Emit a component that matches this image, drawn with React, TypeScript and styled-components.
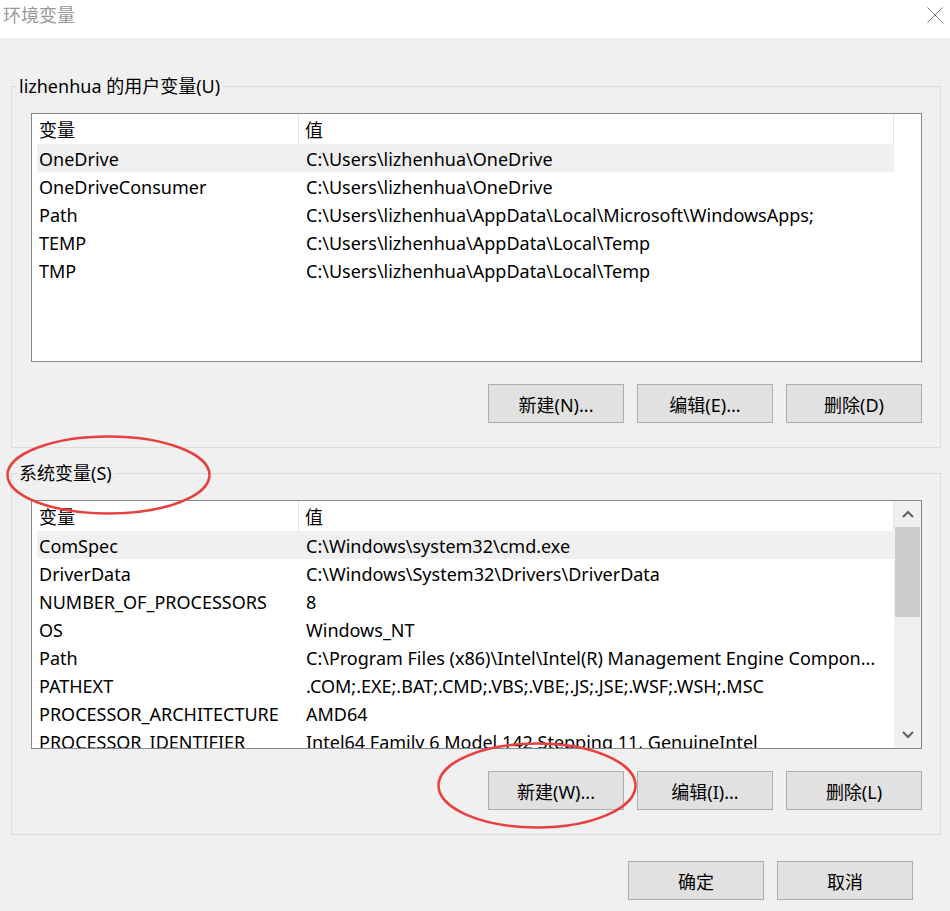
import React from 'react';
import styled, { createGlobalStyle } from 'styled-components';

type EnvVar = {
  name: string;
  value: string;
};

const USER_VARS: EnvVar[] = [
  { name: 'OneDrive', value: 'C:\\Users\\lizhenhua\\OneDrive' },
  { name: 'OneDriveConsumer', value: 'C:\\Users\\lizhenhua\\OneDrive' },
  { name: 'Path', value: 'C:\\Users\\lizhenhua\\AppData\\Local\\Microsoft\\WindowsApps;' },
  { name: 'TEMP', value: 'C:\\Users\\lizhenhua\\AppData\\Local\\Temp' },
  { name: 'TMP', value: 'C:\\Users\\lizhenhua\\AppData\\Local\\Temp' },
];

const SYSTEM_VARS: EnvVar[] = [
  { name: 'ComSpec', value: 'C:\\Windows\\system32\\cmd.exe' },
  { name: 'DriverData', value: 'C:\\Windows\\System32\\Drivers\\DriverData' },
  { name: 'NUMBER_OF_PROCESSORS', value: '8' },
  { name: 'OS', value: 'Windows_NT' },
  { name: 'Path', value: 'C:\\Program Files (x86)\\Intel\\Intel(R) Management Engine Compon...' },
  { name: 'PATHEXT', value: '.COM;.EXE;.BAT;.CMD;.VBS;.VBE;.JS;.JSE;.WSF;.WSH;.MSC' },
  { name: 'PROCESSOR_ARCHITECTURE', value: 'AMD64' },
  { name: 'PROCESSOR_IDENTIFIER', value: 'Intel64 Family 6 Model 142 Stepping 11, GenuineIntel' },
];

const GlobalStyle = createGlobalStyle`
  body {
    margin: 0;
    background: #f0f0f0;
  }
  * {
    box-sizing: border-box;
  }
`;

export default function App() {
  return (
    <>
      <GlobalStyle />
      <Window>
        <TitleBar>
          <Title>环境变量</Title>
          <CloseIcon viewBox="0 0 16 16">
            <path d="M0.5 0.5 L15.5 15.5 M15.5 0.5 L0.5 15.5" />
          </CloseIcon>
        </TitleBar>

        <Body>
          <VarGroup title="lizhenhua 的用户变量(U)" vars={USER_VARS} selected={0} scrollable={false}
            buttons={['新建(N)...', '编辑(E)...', '删除(D)']} />
          <VarGroup title="系统变量(S)" vars={SYSTEM_VARS} selected={0} scrollable
            buttons={['新建(W)...', '编辑(I)...', '删除(L)']} $top={13} />

          <Footer>
            <Button>确定</Button>
            <Button>取消</Button>
          </Footer>
        </Body>

        {/* red hand-drawn annotations on top of the dialog */}
        <Annotations viewBox="0 0 950 911">
          <ellipse cx="108.5" cy="475" rx="101" ry="38.5" />
          <ellipse cx="537" cy="785.5" rx="98.5" ry="42" />
        </Annotations>
      </Window>
    </>
  );
}

type VarGroupProps = {
  title: string;
  vars: EnvVar[];
  selected: number;
  scrollable: boolean;
  buttons: string[];
  $top?: number;
};

function VarGroup({ title, vars, selected, scrollable, buttons, $top = 0 }: VarGroupProps) {
  return (
    <Group $top={$top}>
      <Legend>{title}</Legend>
      <GroupBody>
        <ListBox>
          <Rows>
            <HeaderRow>
              <HeaderCell $first>变量</HeaderCell>
              <HeaderCell>值</HeaderCell>
            </HeaderRow>
            {vars.map((v, i) => (
              <Row key={v.name + i} $selected={i === selected}>
                <Cell $first>{v.name}</Cell>
                <Cell>{v.value}</Cell>
              </Row>
            ))}
          </Rows>
          {scrollable ? (
            <ScrollBar>
              <ArrowButton>
                <Chevron viewBox="0 0 12 8">
                  <polyline points="1,7 6,2 11,7" />
                </Chevron>
              </ArrowButton>
              <Thumb />
              <Track />
              <ArrowButton>
                <Chevron viewBox="0 0 12 8">
                  <polyline points="1,1 6,6 11,1" />
                </Chevron>
              </ArrowButton>
            </ScrollBar>
          ) : (
            <Gutter />
          )}
        </ListBox>
        <ButtonRow>
          {buttons.map((b) => (
            <Button key={b}>{b}</Button>
          ))}
        </ButtonRow>
      </GroupBody>
    </Group>
  );
}

const Window = styled.div`
  position: relative;
  width: 950px;
  height: 911px;
  display: flex;
  flex-direction: column;
  background: #f0f0f0;
  font-family: 'Noto Sans', 'Noto Sans CJK SC', sans-serif;
  font-size: 18px;
  color: #000;
  overflow: hidden;
`;

const TitleBar = styled.div`
  height: 38px;
  flex-shrink: 0;
  display: flex;
  align-items: center;
  justify-content: space-between;
  padding: 0 7px 8px 3px;
  background: #fff;
`;

const Title = styled.span`
  font-size: 18px;
  color: #999;
  line-height: 24px;
`;

const CloseIcon = styled.svg`
  width: 16px;
  height: 16px;
  stroke: #777;
  stroke-width: 1;
  fill: none;
`;

const Body = styled.div`
  display: flex;
  flex-direction: column;
  padding: 36px 9px 0 11px;
`;

const Group = styled.fieldset<{ $top: number }>`
  margin: ${(p) => p.$top}px 0 0 0;
  padding: 0;
  min-width: 0;
  border: 1px solid #dcdcdc;
`;

const Legend = styled.legend`
  margin-left: 5px;
  padding: 0 2px;
  font-size: 18px;
  line-height: 24px;
`;

const GroupBody = styled.div`
  display: flex;
  flex-direction: column;
  padding: 15px 18px 24px 19px;
`;

const ListBox = styled.div`
  display: flex;
  height: 249px;
  border: 1px solid #828790;
  background: #fff;
`;

const Rows = styled.div`
  flex: 1;
  min-width: 0;
  padding-left: 5px;
  overflow: hidden;
`;

const HeaderRow = styled.div`
  display: grid;
  grid-template-columns: 262px 1fr;
  height: 30px;
  line-height: 33px;
`;

const HeaderCell = styled.div<{ $first?: boolean }>`
  padding-left: ${(p) => (p.$first ? 2 : 6)}px;
  border-right: 1px solid #e5e5e5;
  white-space: nowrap;
  overflow: hidden;
`;

const Row = styled.div<{ $selected: boolean }>`
  display: grid;
  grid-template-columns: 262px 1fr;
  height: 28px;
  line-height: 30px;
  background: ${(p) => (p.$selected ? '#f0f0f0' : 'transparent')};
`;

const Cell = styled.div<{ $first?: boolean }>`
  padding-left: ${(p) => (p.$first ? 2 : 7)}px;
  white-space: nowrap;
  overflow: hidden;
  text-overflow: ellipsis;
`;

const Gutter = styled.div`
  width: 27px;
  flex-shrink: 0;
`;

const ScrollBar = styled.div`
  width: 27px;
  flex-shrink: 0;
  display: flex;
  flex-direction: column;
  background: #f0f0f0;
`;

const ArrowButton = styled.div`
  height: 26px;
  display: flex;
  align-items: center;
  justify-content: center;
`;

const Chevron = styled.svg`
  width: 12px;
  height: 8px;
  fill: none;
  stroke: #606060;
  stroke-width: 2;
`;

const Thumb = styled.div`
  height: 90px;
  margin: 0 1px;
  background: #cdcdcd;
`;

const Track = styled.div`
  flex: 1;
`;

const ButtonRow = styled.div`
  display: flex;
  justify-content: flex-end;
  gap: 13px;
  margin-top: 22px;
`;

const Button = styled.button`
  width: 136px;
  height: 39px;
  padding: 0;
  border: 1px solid #adadad;
  background: #e1e1e1;
  font-family: inherit;
  font-size: 18px;
  color: #000;
`;

const Footer = styled.div`
  display: flex;
  justify-content: flex-end;
  gap: 13px;
  padding: 26px 28px 0 0;
`;

const Annotations = styled.svg`
  position: absolute;
  inset: 0;
  width: 950px;
  height: 911px;
  pointer-events: none;
  fill: none;
  stroke: #e8403f;
  stroke-width: 2.5;
`;
